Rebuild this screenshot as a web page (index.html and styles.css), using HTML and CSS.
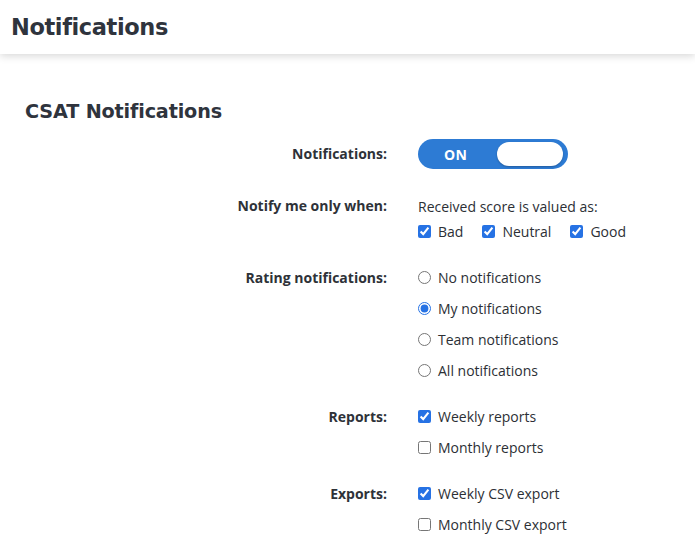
FILE: index.html
```html
<!DOCTYPE html>
<html>
<head>
<meta charset="utf-8">
<link rel="stylesheet" href="styles.css">
</head>
<body>
<header class="topbar"><h1 class="page-title">Notifications</h1></header>
<main class="content">
  <h2 class="section-title">CSAT Notifications</h2>
  <div class="form">
    <div class="row row-toggle">
      <div class="label">Notifications:</div>
      <div class="controls">
        <div class="toggle"><span class="toggle-text">ON</span><span class="knob"></span></div>
      </div>
    </div>
    <div class="row row-notify">
      <div class="label">Notify me only when:</div>
      <div class="controls">
        <div class="line line-intro">Received score is valued as:</div>
        <div class="line line-checks">
          <label class="opt"><input type="checkbox" checked>Bad</label>
          <label class="opt"><input type="checkbox" checked>Neutral</label>
          <label class="opt"><input type="checkbox" checked>Good</label>
        </div>
      </div>
    </div>
    <div class="row row-group">
      <div class="label">Rating notifications:</div>
      <div class="controls">
        <label class="line opt"><input type="radio" name="r">No notifications</label>
        <label class="line opt"><input type="radio" name="r" checked>My notifications</label>
        <label class="line opt"><input type="radio" name="r">Team notifications</label>
        <label class="line opt"><input type="radio" name="r">All notifications</label>
      </div>
    </div>
    <div class="row row-group">
      <div class="label">Reports:</div>
      <div class="controls">
        <label class="line opt"><input type="checkbox" checked>Weekly reports</label>
        <label class="line opt"><input type="checkbox">Monthly reports</label>
      </div>
    </div>
    <div class="row row-group">
      <div class="label">Exports:</div>
      <div class="controls">
        <label class="line opt"><input type="checkbox" checked>Weekly CSV export</label>
        <label class="line opt"><input type="checkbox">Monthly CSV export</label>
      </div>
    </div>
  </div>
</main>
</body>
</html>
```

FILE: styles.css
```css
html, body {
  margin: 0;
  padding: 0;
  background: #ffffff;
}
body {
  font-family: "Open Sans", "Liberation Sans", sans-serif;
  font-size: 14px;
  color: #2c2f35;
}
.topbar {
  height: 54px;
  display: flex;
  align-items: center;
  padding-left: 11px;
  background: #fff;
  box-shadow: 0 2px 8px rgba(0, 0, 0, 0.16);
  position: relative;
}
.page-title {
  margin: 0;
  font-family: "DejaVu Sans", sans-serif;
  font-weight: 700;
  font-size: 22.5px;
  color: #2f343d;
  letter-spacing: -0.4px;
}
.content {
  padding: 0;
}
.section-title {
  margin: 47px 0 0 25px;
  font-family: "DejaVu Sans", sans-serif;
  font-weight: 700;
  font-size: 19.2px;
  line-height: 22px;
  color: #2f343d;
  letter-spacing: -0.15px;
}
.form {
  margin-top: 16px;
}
.row {
  display: flex;
  column-gap: 31px;
}
.label {
  width: 387px;
  flex: none;
  text-align: right;
  font-weight: 700;
  color: #2e3238;
  line-height: 31px;
}
.controls {
  display: flex;
  flex-direction: column;
}
.line {
  height: 31px;
  display: flex;
  align-items: center;
}
.opt {
  display: flex;
  align-items: center;
  gap: 7px;
}
.opt input {
  margin: 0;
  width: 13px;
  height: 13px;
  accent-color: #2672e4;
}
.row-toggle .label {
  line-height: 30px;
}
.toggle {
  width: 150px;
  height: 30px;
  border-radius: 15px;
  background: #2d7bd4;
  display: flex;
  align-items: center;
  justify-content: space-between;
  box-sizing: border-box;
  padding: 0 5px 0 26px;
}
.toggle-text {
  color: #fff;
  font-weight: 700;
  font-size: 14px;
  letter-spacing: 0.3px;
}
.knob {
  width: 66px;
  height: 24px;
  border-radius: 12px;
  background: #fff;
  box-shadow: 0 1px 2px rgba(0, 0, 0, 0.25);
}
.row-notify {
  margin-top: 25px;
}
.row-notify .label {
  line-height: 24px;
}
.line-intro {
  height: 24px;
}
.line-checks {
  height: 27px;
  gap: 19px;
}
.row-group {
  margin-top: 15px;
}
.row-notify + .row-group {
  margin-top: 17px;
}
```
